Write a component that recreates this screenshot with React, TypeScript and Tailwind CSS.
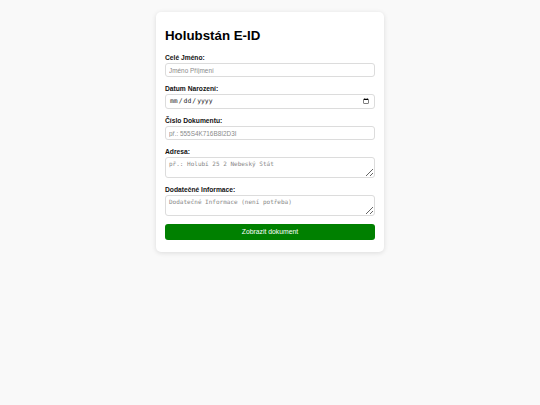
import React, { useState } from "react";

const App = () => {
  const [formData, setFormData] = useState({
    jmeno: "",
    datum: "",
    cislo: "",
    adresa: "",
    info: "",
  });

  // handle change
  const handleChange = (
    e: React.ChangeEvent<HTMLInputElement | HTMLTextAreaElement>
  ) => {
    setFormData({ ...formData, [e.target.name]: e.target.value });
  };

  const labelClass =
    "block text-[6.7px] leading-[9px] font-bold text-[#111] mb-[1px]";
  const inputClass =
    "block w-full h-[14px] border border-[#dcdcdc] rounded-[3px] bg-white px-[3px] text-[6.4px] text-[#222] placeholder:text-[#8a8a8a] outline-none";
  const areaClass =
    "block w-full h-[21px] border border-[#dcdcdc] rounded-[3px] bg-white px-[3px] py-[2px] text-[6px] leading-[7px] text-[#222] placeholder:text-[#888] outline-none font-['DejaVu_Sans_Mono',monospace]";

  return (
    <div className="min-h-screen w-full bg-[#f9f9f9] font-['Liberation_Sans',Arial,sans-serif]">
      <div className="flex justify-center pt-[12px]">
        <div className="w-[228px] bg-white rounded-[5px] shadow-[0_1px_5px_rgba(0,0,0,0.12)] px-[9px] pt-[16px] pb-[12px]">
          <h1 className="text-[13.3px] leading-[16px] font-bold text-black mb-[9px]">
            Holubstán E-ID
          </h1>
          <form onSubmit={(e) => e.preventDefault()}>
            <div className="mb-[7px]">
              <label className={labelClass} htmlFor="jmeno">
                Celé Jméno:
              </label>
              <input
                className={inputClass}
                id="jmeno"
                name="jmeno"
                type="text"
                placeholder="Jméno Příjmení"
                value={formData.jmeno}
                onChange={handleChange}
              />
            </div>
            <div className="mb-[7px]">
              <label className={labelClass} htmlFor="datum">
                Datum Narození:
              </label>
              <input
                className={inputClass + " font-['DejaVu_Sans_Mono',monospace] h-[15px] text-[5.8px]"}
                id="datum"
                name="datum"
                type="date"
                value={formData.datum}
                onChange={handleChange}
              />
            </div>
            <div className="mb-[7px]">
              <label className={labelClass} htmlFor="cislo">
                Číslo Dokumentu:
              </label>
              <input
                className={inputClass}
                id="cislo"
                name="cislo"
                type="text"
                placeholder="př.: 555S4K716B8I2D3I"
                value={formData.cislo}
                onChange={handleChange}
              />
            </div>
            <div className="mb-[7px]">
              <label className={labelClass} htmlFor="adresa">
                Adresa:
              </label>
              <textarea
                className={areaClass}
                id="adresa"
                name="adresa"
                placeholder="př.: Holubí 25 2 Nebeský Stát"
                value={formData.adresa}
                onChange={handleChange}
              />
            </div>
            <div className="mb-[8px]">
              <label className={labelClass} htmlFor="info">
                Dodatečné Informace:
              </label>
              <textarea
                className={areaClass}
                id="info"
                name="info"
                placeholder="Dodatečné Informace (není potřeba)"
                value={formData.info}
                onChange={handleChange}
              />
            </div>
            <button
              className="block w-full h-[16px] bg-[#008000] text-white text-[6.8px] rounded-[3px]"
              type="submit"
            >
              Zobrazit dokument
            </button>
          </form>
        </div>
      </div>
    </div>
  );
};

export default App;
